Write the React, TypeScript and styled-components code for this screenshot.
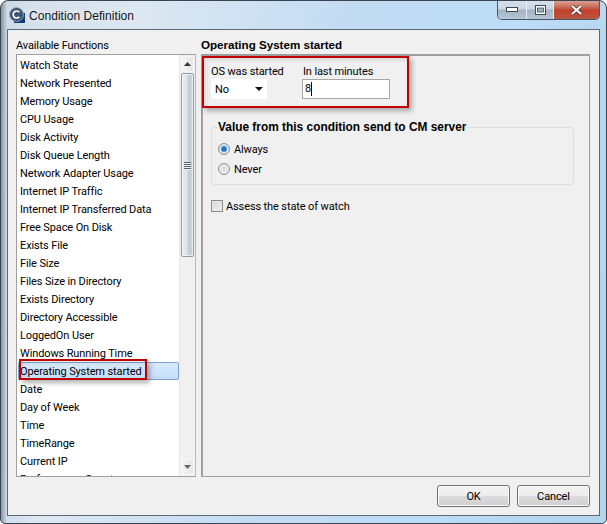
import React from "react";
import styled, { createGlobalStyle } from "styled-components";

const Global = createGlobalStyle`
  html, body { margin: 0; padding: 0; width: 607px; height: 524px; overflow: hidden; background: #fff; }
  * { box-sizing: border-box; }
  body { font-family: Roboto, "Liberation Sans", Arial, sans-serif; font-size: 11px; letter-spacing: -0.12px; color: #000; }
`;

const Frame = styled.div`
  position: relative;
  width: 607px;
  height: 524px;
  border: 1px solid #3a4350;
  border-radius: 8px 8px 5px 5px;
  background:
    linear-gradient(90deg, rgba(70,90,110,.55) 0, rgba(170,200,225,.2) 6px, rgba(0,0,0,0) 30px),
    linear-gradient(100deg, #d4dee8 0%, #dce7f1 20%, #c3dcf3 50%, #bcdcf7 75%, #b4d4ec 100%);
  display: flex;
  flex-direction: column;
  overflow: hidden;
`;

const TitleBar = styled.div`
  height: 28px;
  flex: none;
  display: flex;
  align-items: flex-start;
  padding-left: 8px;
`;

const AppIcon = styled.svg`
  width: 17px;
  height: 17px;
  margin-top: 6px;
  flex: none;
`;

const Title = styled.div`
  margin: 7px 0 0 3px;
  font-family: "Liberation Sans", Arial, sans-serif;
  font-size: 12px;
  line-height: 16px;
  letter-spacing: 0.05px;
  color: #10151c;
  text-shadow: 0 0 6px rgba(255,255,255,.9);
`;

const Controls = styled.div`
  margin-left: auto;
  margin-right: 6px;
  margin-top: -1px;
  display: flex;
  height: 20px;
  border: 1px solid #4a5866;
  border-top: none;
  border-radius: 0 0 5px 5px;
  overflow: hidden;
`;

const Ctl = styled.div<{ $w: number; $close?: boolean }>`
  width: ${(p) => p.$w}px;
  display: flex;
  align-items: center;
  justify-content: center;
  border-left: ${(p) => (p.$close ? "1px solid #e8eef4" : "none")};
  background: ${(p) =>
    p.$close
      ? "linear-gradient(180deg,#dca79c 0,#c9705f 35%,#c2412c 55%,#b8553f 100%)"
      : "linear-gradient(180deg,#d7e1eb 0,#c9d6e3 45%,#a4b4c4 55%,#b4c6d6 100%)"};
  & + & { border-left: 1px solid #e8eef4; }
`;

const Client = styled.div`
  flex: 1;
  margin: 0 6px 7px 6px;
  background: #f0f0f0;
  border: 1px solid #5b6a78;
  padding: 7px 9px 6px 8px;
  display: flex;
  flex-direction: column;
`;

const Columns = styled.div`
  display: grid;
  grid-template-columns: 180px 389px;
  column-gap: 5px;
  height: 440px;
  flex: none;
`;

const Col = styled.div`
  display: flex;
  flex-direction: column;
  min-height: 0;
`;

const Caption = styled.div<{ $bold?: boolean }>`
  height: 17px;
  line-height: ${(p) => (p.$bold ? 16 : 18)}px;
  white-space: nowrap;
  flex: none;
  font-family: ${(p) => (p.$bold ? '"Liberation Sans", Arial, sans-serif' : "inherit")};
  font-size: ${(p) => (p.$bold ? "11.6px" : "inherit")};
  font-weight: ${(p) => (p.$bold ? 700 : 400)};
  letter-spacing: ${(p) => (p.$bold ? 0 : -0.12)}px;
`;

const ListBox = styled.div`
  flex: 1;
  min-height: 0;
  background: #fff;
  border: 1px solid #a0a0a0;
  border-right-color: #b8b8b8;
  display: flex;
  overflow: hidden;
`;

const Items = styled.div`
  width: 162px;
  padding: 1px 0 0 1px;
  overflow: hidden;
  flex: none;
`;

const Item = styled.div<{ $sel?: boolean }>`
  height: 18px;
  line-height: 20px;
  padding-left: 2px;
  white-space: nowrap;
  border-radius: 2px;
  ${(p) =>
    p.$sel
      ? "background: linear-gradient(180deg,#dcebfc,#c2dcfd); box-shadow: inset 0 0 0 1px #7da2ce;"
      : ""}
`;

const ScrollBar = styled.div`
  flex: 1;
  background: #f0f0f0;
  border-left: 1px solid #e8e8e8;
  display: flex;
  flex-direction: column;
  padding: 1px;
`;

const ScrollBtn = styled.div`
  height: 16px;
  flex: none;
  background: linear-gradient(90deg,#f4f4f4,#e6e6e6);
  border: 1px solid #f8f8f8;
  display: flex;
  align-items: center;
  justify-content: center;
`;

const Thumb = styled.div`
  height: 184px;
  flex: none;
  margin-top: 1px;
  border: 1px solid #8f9ba6;
  border-radius: 2px;
  background: linear-gradient(90deg,#e6ebef 0,#dde5ea 45%,#c0ced8 55%,#c9d5de 100%);
  box-shadow: inset 0 0 0 1px rgba(255,255,255,.6);
  display: flex;
  flex-direction: column;
  align-items: center;
  justify-content: center;
  gap: 1px;
`;

const Grip = styled.div`
  width: 7px;
  height: 1px;
  background: #59636c;
  box-shadow: 0 1px 0 #eef2f5;
`;

const Spring = styled.div`
  flex: 1;
`;

const Panel = styled.div`
  flex: 1;
  border: 1px solid #a0a0a0;
  border-top: 2px solid #a0a0a0;
  border-left: 2px solid #a0a0a0;
  padding: 7px 15px 0 8px;
  display: flex;
  flex-direction: column;
`;

const TopRow = styled.div`
  display: flex;
`;

const Field = styled.div<{ $w: number }>`
  width: ${(p) => p.$w}px;
  display: flex;
  flex-direction: column;
`;

const FieldLabel = styled.div<{ $pad?: number }>`
  height: 16px;
  line-height: 18px;
  padding-left: ${(p) => p.$pad ?? 0}px;
  white-space: nowrap;
`;

const SelectBox = styled.div`
  width: 56px;
  height: 20px;
  background: #fff;
  display: flex;
  align-items: center;
  justify-content: space-between;
  padding: 0 4px 0 4px;
`;

const Caret = styled.div`
  width: 0;
  height: 0;
  border-left: 4px solid transparent;
  border-right: 4px solid transparent;
  border-top: 4px solid #111;
`;

const TextInput = styled.div`
  width: 88px;
  height: 20px;
  background: #fff;
  border: 1px solid #a6a6a6;
  padding-left: 2px;
  line-height: 18px;
  display: flex;
`;

const TextCursor = styled.span`
  display: inline-block;
  width: 1px;
  height: 14px;
  margin-top: 2px;
  background: #000;
`;

const Group = styled.fieldset`
  margin: 21px 0 0 0;
  width: 363px;
  height: 65px;
  border: 1px solid #d9dfe3;
  border-radius: 3px;
  padding: 5px 0 0 6px;
  min-width: 0;
`;

const Legend = styled.legend`
  padding: 0;
  margin-left: 0;
  font-family: "Liberation Sans", Arial, sans-serif;
  font-weight: 700;
  font-size: 11.9px;
  letter-spacing: 0;
  line-height: 14px;
  white-space: nowrap;
`;

const OptionRow = styled.div`
  height: 20px;
  display: flex;
  align-items: center;
  gap: 4px;
`;

const Radio = styled.div<{ $on?: boolean }>`
  width: 12px;
  height: 12px;
  border-radius: 50%;
  border: 1px solid #8a8f94;
  background: ${(p) =>
    p.$on
      ? "radial-gradient(circle,#2a7fc4 0,#2073b5 30%,#d0e2f0 50%,#e8eef3 100%)"
      : "radial-gradient(circle,#dcdcdc 0,#e4e4e4 40%,#f7f7f7 100%)"};
`;

const CheckRow = styled.div`
  margin-top: 14px;
  height: 14px;
  display: flex;
  align-items: center;
  gap: 3px;
`;

const Check = styled.div`
  width: 12px;
  height: 12px;
  border: 1px solid #8a8a8a;
  background: linear-gradient(135deg,#d4d4d4,#f4f4f4);
  box-shadow: inset 0 0 0 1px #e9e9e9;
`;

const Footer = styled.div`
  margin-top: 8px;
  display: flex;
  justify-content: flex-end;
  gap: 7px;
`;

const Btn = styled.div`
  width: 73px;
  height: 22px;
  border: 1px solid #707070;
  border-radius: 3px;
  background: linear-gradient(180deg,#f3f3f3 0,#ececec 48%,#dcdcdc 52%,#cfcfcf 100%);
  box-shadow: inset 0 0 0 1px #fbfbfb;
  display: flex;
  align-items: center;
  justify-content: center;
`;

const RedBox = styled.div<{ $x: number; $y: number; $w: number; $h: number }>`
  position: absolute;
  left: ${(p) => p.$x}px;
  top: ${(p) => p.$y}px;
  width: ${(p) => p.$w}px;
  height: ${(p) => p.$h}px;
  border: 2px solid #c00000;
  box-shadow: 3px 3px 5px rgba(0,0,0,.3), inset 2px 2px 4px rgba(0,0,0,.1);
  pointer-events: none;
`;

const items = [
  "Watch State", "Network Presented", "Memory Usage", "CPU Usage", "Disk Activity",
  "Disk Queue Length", "Network Adapter Usage", "Internet IP Traffic",
  "Internet IP Transferred Data", "Free Space On Disk", "Exists File", "File Size",
  "Files Size in Directory", "Exists Directory", "Directory Accessible", "LoggedOn User",
  "Windows Running Time", "Operating System started", "Date", "Day of Week", "Time",
  "TimeRange", "Current IP", "Performance Counter",
];

export default function App() {
  return (
    <>
      <Global />
      <Frame>
        <TitleBar>
          <AppIcon viewBox="0 0 17 17">
            <rect x="5" y="6" width="11" height="10" fill="#123a78" />
            <circle cx="7.5" cy="7.5" r="7" fill="#3d5670" />
            <circle cx="7.5" cy="7.5" r="7" fill="none" stroke="#9fb2c4" strokeWidth="0.8" />
            <path d="M10.4 5.300A3.500 3.500 0 1 0 10.400 9.700" fill="none" stroke="#fff" strokeWidth="1.7" />
          </AppIcon>
          <Title>Condition Definition</Title>
          <Controls>
            <Ctl $w={28}>
              <svg width="12" height="6" viewBox="0 0 12 6">
                <rect x="0.5" y="0.5" width="11" height="4" fill="#fff" stroke="#3c4a58" />
              </svg>
            </Ctl>
            <Ctl $w={27}>
              <svg width="11" height="10" viewBox="0 0 11 10">
                <rect x="0.5" y="0.5" width="10" height="9" fill="#fff" stroke="#3c4a58" />
                <rect x="2.5" y="3" width="6" height="4" fill="#9fb0bf" stroke="#3c4a58" strokeWidth="0.8" />
              </svg>
            </Ctl>
            <Ctl $w={46} $close>
              <svg width="13" height="10" viewBox="0 0 13 10">
                <path d="M2 1l9 8M11 1l-9 8" stroke="#3a2a28" strokeWidth="3.4" />
                <path d="M2 1l9 8M11 1l-9 8" stroke="#fff" strokeWidth="2.2" />
              </svg>
            </Ctl>
          </Controls>
        </TitleBar>
        <Client>
          <Columns>
            <Col>
              <Caption>Available Functions</Caption>
              <ListBox>
                <Items>
                  {items.map((t) => (
                    <Item key={t} $sel={t === "Operating System started"}>{t}</Item>
                  ))}
                </Items>
                <ScrollBar>
                  <ScrollBtn>
                    <svg width="7" height="4" viewBox="0 0 7 4"><path d="M3.500 0L7 4H0z" fill="#333" /></svg>
                  </ScrollBtn>
                  <Thumb>
                    <Grip /><Grip /><Grip /><Grip />
                  </Thumb>
                  <Spring />
                  <ScrollBtn>
                    <svg width="7" height="4" viewBox="0 0 7 4"><path d="M0 0h7L3.500 4z" fill="#666" /></svg>
                  </ScrollBtn>
                </ScrollBar>
              </ListBox>
            </Col>
            <Col>
              <Caption $bold>Operating System started</Caption>
              <Panel>
                <TopRow>
                  <Field $w={91}>
                    <FieldLabel>OS was started</FieldLabel>
                    <SelectBox>
                      No
                      <Caret />
                    </SelectBox>
                  </Field>
                  <Field $w={90}>
                    <FieldLabel $pad={1}>In last minutes</FieldLabel>
                    <TextInput>8<TextCursor /></TextInput>
                  </Field>
                </TopRow>
                <Group>
                  <Legend>Value from this condition send to CM server</Legend>
                  <OptionRow><Radio $on />Always</OptionRow>
                  <OptionRow><Radio />Never</OptionRow>
                </Group>
                <CheckRow><Check />Assess the state of watch</CheckRow>
              </Panel>
            </Col>
          </Columns>
          <Footer>
            <Btn>OK</Btn>
            <Btn>Cancel</Btn>
          </Footer>
        </Client>
        <RedBox $x={201} $y={55} $w={207} $h={52} />
        <RedBox $x={18} $y={358} $w={128} $h={21} />
      </Frame>
    </>
  );
}
